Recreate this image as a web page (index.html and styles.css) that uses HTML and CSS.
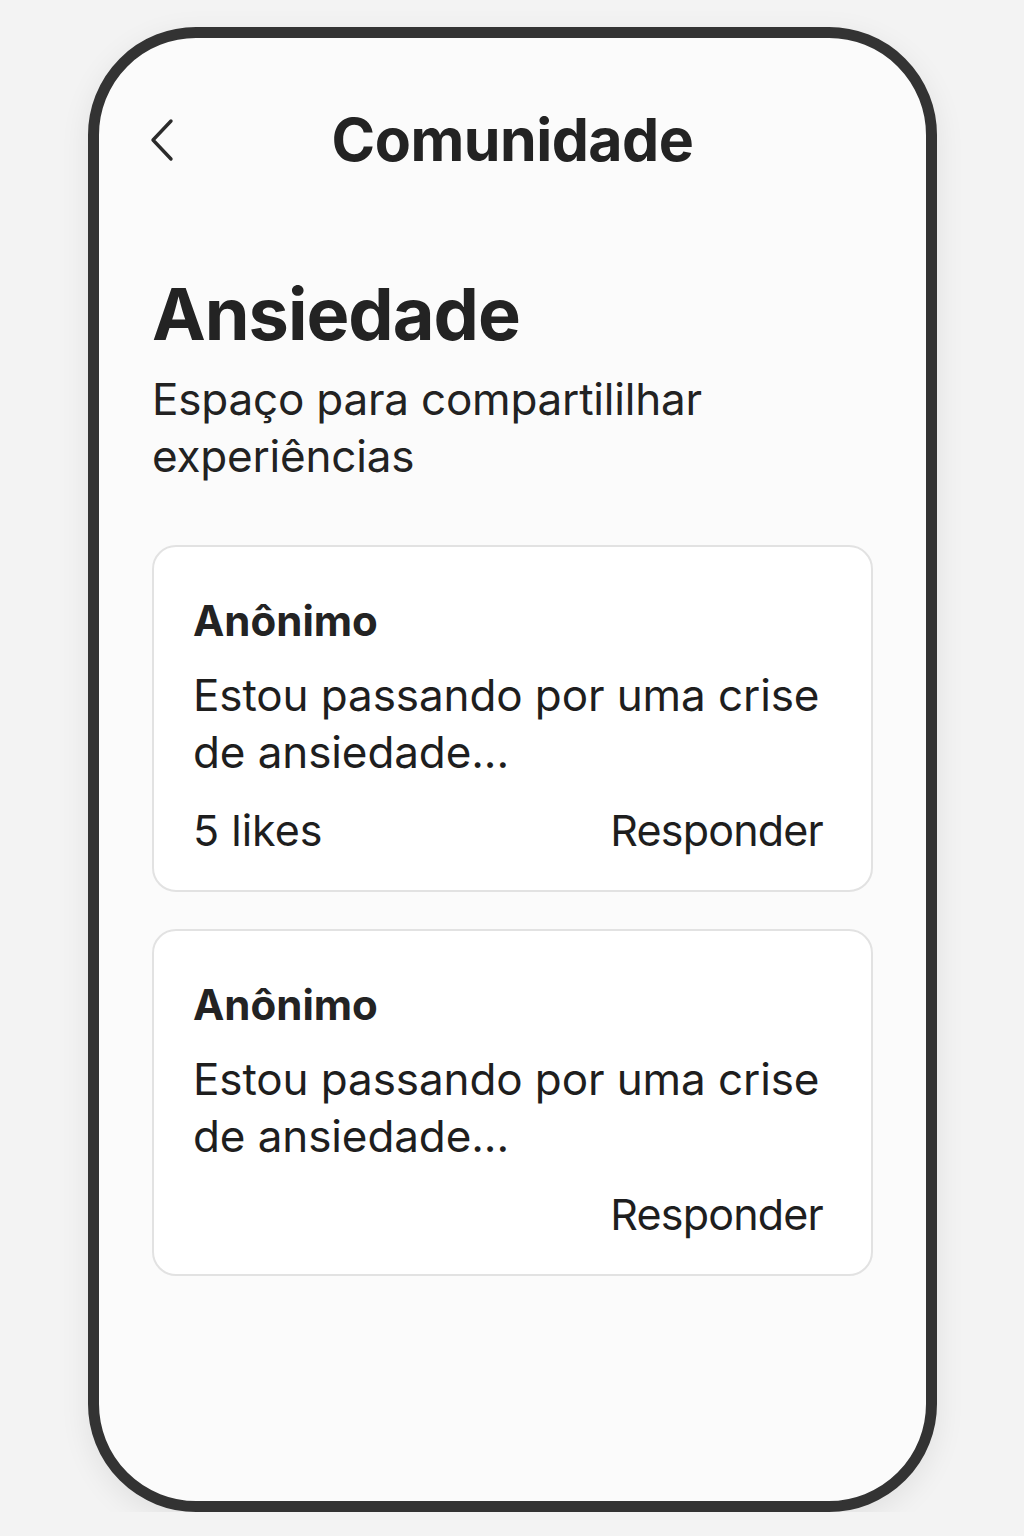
FILE: index.html
```html
<!DOCTYPE html>
<html lang="pt-BR">
<head>
<meta charset="utf-8">
<title>Comunidade</title>
<link rel="stylesheet" href="styles.css">
</head>
<body>
<div class="phone">
  <header class="topbar">
    <button class="back" aria-label="Voltar">
      <svg width="28" height="44" viewBox="0 0 28 44" fill="none" stroke="#2b2b2b" stroke-width="3.4" stroke-linecap="round" stroke-linejoin="round"><path d="M23 3 L5 22 L23 41"/></svg>
    </button>
    <h1 class="title">Comunidade</h1>
    <span class="spacer"></span>
  </header>
  <main class="content">
    <section class="intro">
      <h2 class="group">Ansiedade</h2>
      <p class="desc">Espaço para compartililhar experiências</p>
    </section>
    <article class="card">
      <h3 class="author">Anônimo</h3>
      <p class="body">Estou passando por uma crise de ansiedade...</p>
      <div class="meta">
        <span class="likes">5 likes</span>
        <span class="reply">Responder</span>
      </div>
    </article>
    <article class="card">
      <h3 class="author">Anônimo</h3>
      <p class="body">Estou passando por uma crise de ansiedade...</p>
      <div class="meta">
        <span class="reply">Responder</span>
      </div>
    </article>
  </main>
</div>
</body>
</html>
```

FILE: styles.css
```css
* { box-sizing: border-box; }
html, body { margin: 0; padding: 0; }
body {
  background: #f3f3f3;
  font-family: Inter, "Noto Sans", sans-serif;
  color: #222;
  padding: 27px 0 0 88px;
}
.phone {
  width: 849px;
  height: 1485px;
  border: 11px solid #333;
  border-radius: 108px;
  background: #fbfbfb;
  box-shadow: 0 8px 30px rgba(0,0,0,0.08);
  padding: 0 53px;
}
.topbar {
  display: grid;
  grid-template-columns: 1fr auto 1fr;
  align-items: center;
  padding-top: 70px;
}
.back {
  justify-self: start;
  background: none;
  border: 0;
  padding: 0;
  margin-left: -4px;
  display: flex;
}
.title {
  margin: 0;
  font-size: 59px;
  font-weight: 700;
  line-height: 64px;
  letter-spacing: -0.5px;
  color: #232323;
}
.intro { margin-top: 102px; }
.group {
  margin: 0;
  font-size: 72px;
  font-weight: 700;
  line-height: 80px;
  letter-spacing: -1px;
  color: #232323;
}
.desc {
  margin: 17px 0 0;
  font-size: 44px;
  line-height: 57px;
  font-weight: 400;
  letter-spacing: -0.2px;
  color: #222;
  max-width: 600px;
}
.card {
  margin-top: 37px;
  background: #fff;
  border: 2px solid #e2e2e2;
  border-radius: 24px;
  padding: 50px 48px 31px 39px;
}
.intro + .card { margin-top: 60px; }
.author {
  margin: 0;
  font-size: 42px;
  font-weight: 700;
  line-height: 48px;
  color: #232323;
}
.body {
  margin: 22px 0 0;
  font-size: 44px;
  line-height: 57px;
  letter-spacing: -0.1px;
  color: #1e1e1e;
}
.meta {
  display: flex;
  justify-content: space-between;
  align-items: baseline;
  margin-top: 21px;
  font-size: 43px;
  line-height: 57px;
  color: #1e1e1e;
}
.meta .reply { margin-left: auto; letter-spacing: -0.8px; }
```
